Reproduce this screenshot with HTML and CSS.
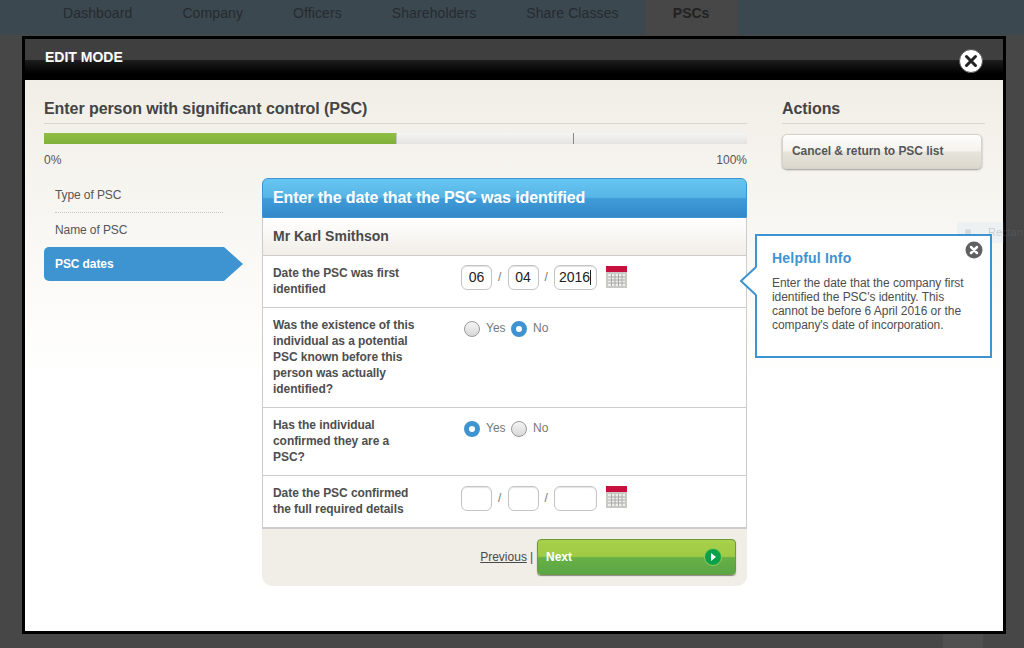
FILE: index.html
```html
<!DOCTYPE html>
<html lang="en">
<head>
    <meta charset="UTF-8">
    <title>Edit PSC</title>
    <link rel="stylesheet" href="styles.css">
</head>
<body>
    <header class="topbar">
        <nav class="topnav">
            <a href="#">Dashboard</a>
            <a href="#">Company</a>
            <a href="#">Officers</a>
            <a href="#">Shareholders</a>
            <a href="#">Share Classes</a>
            <a href="#" class="active">PSCs</a>
        </nav>
    </header>
    <div class="page-tab"></div>

    <!-- Edit modal -->
    <div class="modal">
        <div class="modal-head">
            <span>EDIT MODE</span>
            <a href="#" class="modal-close">
                <svg width="26" height="26" viewBox="0 0 26 26"><circle cx="13" cy="13" r="11.500" fill="#fff" stroke="#555" stroke-width="1"/><path d="M8.500 8.500l9 9M17.500 8.500l-9 9" stroke="#222" stroke-width="3" stroke-linecap="round"/></svg>
            </a>
        </div>
        <div class="modal-body">
            <div class="main-col">
                <h2 class="section-title">Enter person with significant control (PSC)</h2>
                <div class="progress"><div class="progress-fill"></div><div class="progress-tick"></div></div>
                <div class="progress-labels"><span>0%</span><span>100%</span></div>

                <div class="wizard">
                    <ul class="steps">
                        <li>Type of PSC</li>
                        <li>Name of PSC</li>
                        <li class="current">PSC dates</li>
                    </ul>

                    <div class="panel">
                        <h3 class="panel-title">Enter the date that the PSC was identified</h3>
                        <div class="panel-name">Mr Karl Smithson</div>

                        <div class="row row-date">
                            <label>Date the PSC was first identified</label>
                            <div class="field">
                                <span class="box">06</span><i>/</i><span class="box">04</span><i>/</i><span class="box year">2016<b class="caret"></b></span>
                                <svg class="cal" width="21" height="22" viewBox="0 0 21 22"><rect width="21" height="22" fill="#c8c8c4"/><rect width="21" height="6" fill="#c8103f"/><rect x="2" y="8" width="17" height="12" fill="#eeeeea"/><path d="M2 11h17M2 14h17M2 17h17M5.500 8v12M9 8v12M12.500 8v12M16 8v12" stroke="#aaa" stroke-width="1"/></svg>
                            </div>
                        </div>

                        <div class="row row-q1">
                            <label>Was the existence of this individual as a potential PSC known before this person was actually identified?</label>
                            <div class="field radios">
                                <span class="radio"></span><span class="opt">Yes</span>
                                <span class="radio on"></span><span class="opt">No</span>
                            </div>
                        </div>

                        <div class="row row-q2">
                            <label>Has the individual confirmed they are a PSC?</label>
                            <div class="field radios">
                                <span class="radio on"></span><span class="opt">Yes</span>
                                <span class="radio"></span><span class="opt">No</span>
                            </div>
                        </div>

                        <div class="row row-date2">
                            <label>Date the PSC confirmed the full required details</label>
                            <div class="field">
                                <span class="box"></span><i>/</i><span class="box"></span><i>/</i><span class="box year"></span>
                                <svg class="cal" width="21" height="22" viewBox="0 0 21 22"><rect width="21" height="22" fill="#c8c8c4"/><rect width="21" height="6" fill="#c8103f"/><rect x="2" y="8" width="17" height="12" fill="#eeeeea"/><path d="M2 11h17M2 14h17M2 17h17M5.500 8v12M9 8v12M12.500 8v12M16 8v12" stroke="#aaa" stroke-width="1"/></svg>
                            </div>
                        </div>

                        <div class="panel-foot">
                            <a href="#" class="prev">Previous</a><span class="sep">|</span>
                            <a href="#" class="next">
                                <span>Next</span>
                                <svg width="18" height="18" viewBox="0 0 18 18"><circle cx="9" cy="9" r="8.500" fill="#0ba14b" stroke="#8ccf5a" stroke-width="1"/><path d="M7 5l5 4-5 4z" fill="#fff"/></svg>
                            </a>
                        </div>
                    </div>
                </div>
            </div>

            <aside class="side-col">
                <h2 class="section-title">Actions</h2>
                <a href="#" class="cancel-btn">Cancel &amp; return to PSC list</a>
            </aside>

            <!-- Help bubble sits over the body, next to the panel -->
            <div class="ghost"><span></span>Rectan</div>
            <div class="help">
                <svg class="help-arrow" width="18" height="30" viewBox="0 0 18 30"><path d="M18 1L1 15l17 14z" fill="#fff"/><path d="M17 1L2 15l15 14" fill="none" stroke="#3d94d0" stroke-width="2"/></svg>
                <svg class="help-close" width="18" height="18" viewBox="0 0 18 18"><circle cx="9" cy="9" r="8.500" fill="#606060"/><path d="M6 6l6 6M12 6l-6 6" stroke="#fff" stroke-width="2.500" stroke-linecap="round"/></svg>
                <h4>Helpful Info</h4>
                <p>Enter the date that the company first identified the PSC's identity. This cannot be before 6 April 2016 or the company's date of incorporation.</p>
            </div>
        </div>
    </div>
</body>
</html>
```

FILE: styles.css
```css
/* General Styles */
html, body {
    height: 100%;
}

body {
    margin: 0;
    padding: 0;
    background: #474747;
    font-family: "Liberation Sans", Arial, sans-serif;
    color: #4a4a4a;
    overflow: hidden;
    position: relative;
}

a {
    color: inherit;
    text-decoration: none;
}

/* Dimmed top nav */
.topbar {
    height: 35px;
    background: #3c4850;
}

.topnav {
    display: flex;
    gap: 50px;
    padding-left: 63px;
    height: 100%;
}

.topnav a {
    font-size: 14px;
    line-height: 27px;
    letter-spacing: 0.1px;
    color: #252b2f;
}

.topnav a.active {
    margin-left: -24px;
    width: 93px;
    text-align: center;
    font-weight: bold;
    letter-spacing: 0;
    background: #474747;
    color: #222;
}

.page-tab {
    position: absolute;
    left: 943px;
    top: 634px;
    width: 40px;
    height: 14px;
    background: #505050;
}

/* Modal */
.modal {
    position: absolute;
    left: 22px;
    top: 36px;
    width: 978px;
    height: 592px;
    border: 3px solid #000;
    background: #fff;
    display: flex;
    flex-direction: column;
}

.modal-head {
    height: 41px;
    flex: none;
    background: linear-gradient(#3f3f3f 0, #3f3f3f 51%, #1c1c1c 52%, #000 85%);
    color: #fff;
    font-size: 14px;
    font-weight: bold;
    padding: 10px 20px 0;
    box-sizing: border-box;
    position: relative;
}

.modal-close {
    position: absolute;
    right: 20px;
    top: 9px;
    height: 26px;
    margin-right: -1px;
}

.modal-body {
    flex: 1;
    position: relative;
    display: flex;
    gap: 35px;
    padding: 0 19px;
    background: linear-gradient(#f1eee7 0, #fbfaf7 200px, #fff 300px);
}

.main-col {
    width: 703px;
    flex: none;
}

.side-col {
    width: 203px;
    flex: none;
}

.section-title {
    margin: 19px 0 0;
    padding-bottom: 5px;
    height: 19px;
    font-size: 16px;
    line-height: 19px;
    font-weight: bold;
    letter-spacing: -0.07px;
    color: #444;
    border-bottom: 1px solid #d8d5ce;
}

/* Progress */
.progress {
    height: 11px;
    margin-top: 9px;
    background: linear-gradient(#f5f5f3, #e4e3e0);
    position: relative;
}

.progress-fill {
    width: 352px;
    height: 100%;
    background: linear-gradient(#8fbf42, #7fb03a);
    border-right: 1px solid #c4c4c0;
}

.progress-tick {
    position: absolute;
    left: 529px;
    top: 0;
    width: 1px;
    height: 100%;
    background: #888;
}

.progress-labels {
    display: flex;
    justify-content: space-between;
    font-size: 12px;
    line-height: 14px;
    margin-top: 9px;
    color: #555;
}

/* Wizard */
.wizard {
    display: flex;
    margin-top: 11px;
}

.steps {
    list-style: none;
    width: 218px;
    flex: none;
    margin: 0;
    padding: 0;
    font-size: 12px;
    letter-spacing: -0.1px;
}

.steps li {
    width: 168px;
    margin-left: 11px;
    height: 34px;
    line-height: 35px;
    border-bottom: 1px dotted #c8c5bd;
    box-sizing: content-box;
    color: #555;
}

.steps li.current {
    width: 188px;
    margin: -1px 0 0;
    padding-left: 11px;
    height: 34px;
    line-height: 34px;
    border: 0;
    font-weight: bold;
    color: #fff;
    background: #3d94d0;
    border-radius: 5px 0 0 5px;
    clip-path: polygon(0 0, 180px 0, 199px 17px, 180px 34px, 0 34px);
}

.panel {
    width: 485px;
    flex: none;
}

.panel-title {
    margin: 0;
    height: 40px;
    box-sizing: border-box;
    padding-left: 10px;
    font-size: 16px;
    line-height: 37px;
    font-weight: bold;
    letter-spacing: -0.1px;
    color: #fff;
    border: 1px solid #3d94d0;
    border-radius: 6px 6px 0 0;
    background: linear-gradient(#66c6f2 0, #58b5e6 48%, #3f9cd8 52%, #3388c8 100%);
}

.panel-name {
    height: 38px;
    box-sizing: border-box;
    padding-left: 10px;
    font-size: 14px;
    line-height: 37px;
    font-weight: bold;
    color: #4a4a4a;
    border: 1px solid #ccc;
    border-top: 0;
    background: linear-gradient(#fff, #f1eee7);
}

.row {
    display: flex;
    box-sizing: border-box;
    padding: 9px 10px 0;
    background: #fff;
    border: 1px solid #ccc;
    border-top: 0;
}

.row-date { height: 52px; }
.row-q1 { height: 100px; }
.row-q2 { height: 68px; }
.row-date2 { height: 53px; border-bottom-width: 2px; }

.row label {
    width: 144px;
    flex: none;
    font-size: 12px;
    line-height: 16px;
    font-weight: bold;
    letter-spacing: -0.06px;
    color: #4e4e4e;
}

.field {
    margin-left: 44px;
    display: flex;
    align-items: flex-start;
    font-size: 14px;
    color: #222;
}

.row-date2 .field {
    margin-top: 1px;
}

.field i {
    width: 15.5px;
    text-align: center;
    font-style: normal;
    font-size: 12px;
    line-height: 24px;
    color: #777;
}

.box {
    width: 31px;
    height: 25px;
    box-sizing: border-box;
    border: 1px solid #c4c4c4;
    border-radius: 6px;
    text-align: center;
    line-height: 23px;
    font-size: 14px;
    background: #fff;
    box-shadow: inset 0 1px 1px #e4e4e4;
}

.box.year {
    width: 43px;
    position: relative;
    padding-left: 4px;
    text-align: left;
}

.caret {
    display: inline-block;
    width: 1px;
    height: 15px;
    background: #222;
    vertical-align: -3px;
}

.cal {
    margin-left: 9px;
}

.row-date .cal {
    margin-top: 1px;
}

/* Radios */
.radios {
    margin-left: 47px;
    font-size: 12px;
    padding-top: 4px;
}

.radio {
    width: 16px;
    height: 16px;
    box-sizing: border-box;
    border: 1px solid #999;
    border-radius: 50%;
    background: linear-gradient(#f4f4f4, #d8d8d8);
}

.radio.on {
    border: 5px solid #3d94d0;
    background: #fff;
}

.opt {
    width: 25px;
    margin-left: 6px;
    line-height: 15px;
    color: #777;
}

/* Footer */
.panel-foot {
    height: 57px;
    box-sizing: border-box;
    padding: 10px 11px 0 0;
    display: flex;
    justify-content: flex-end;
    align-items: flex-start;
    background: #f1eee7;
    border-radius: 0 0 10px 10px;
    font-size: 12px;
}

.prev {
    text-decoration: underline;
    line-height: 37px;
}

.sep {
    line-height: 37px;
    margin: 0 4px 0 3px;
}

.next {
    width: 199px;
    height: 36px;
    box-sizing: border-box;
    display: flex;
    justify-content: space-between;
    align-items: center;
    padding: 0 13px 0 8px;
    color: #fff;
    font-weight: bold;
    border: 1px solid #6d9a3a;
    border-radius: 4px;
    background: linear-gradient(#a9d04a 0, #9ecb45 48%, #68b046 52%, #5aa645 100%);
    box-shadow: 0 1px 1px #888;
}

/* Actions */
.cancel-btn {
    display: block;
    width: 200px;
    height: 35px;
    margin-top: 10px;
    box-sizing: border-box;
    padding-left: 9px;
    font-size: 12px;
    line-height: 32px;
    font-weight: bold;
    letter-spacing: -0.05px;
    color: #56565a;
    border: 1px solid #d6d3cb;
    border-radius: 5px;
    background: linear-gradient(#fdfdfb 0, #f4f2ec 48%, #e6e3da 52%, #dcd8ce 100%);
    box-shadow: 0 1px 2px #999;
}

/* Help bubble */
.help {
    position: absolute;
    left: 730px;
    top: 154px;
    width: 237px;
    height: 124px;
    box-sizing: border-box;
    padding: 14px 15px 0;
    background: #fff;
    border: 2px solid #3d94d0;
    z-index: 2;
}

.help h4 {
    margin: 0 0 10px;
    font-size: 14px;
    line-height: 16px;
    font-weight: bold;
    letter-spacing: 0.2px;
    color: #3d94d0;
}

.help p {
    margin: 0;
    font-size: 12px;
    line-height: 14px;
    letter-spacing: -0.05px;
    color: #4e4e4e;
}

.help-arrow {
    position: absolute;
    left: -18px;
    top: 30px;
}

.help-close {
    position: absolute;
    right: 7px;
    top: 5px;
}

/* Faint leftover label showing through the overlay */
.ghost {
    position: absolute;
    left: 932px;
    top: 142px;
    width: 47px;
    height: 21px;
    box-sizing: border-box;
    padding-left: 31px;
    font-size: 11px;
    line-height: 21px;
    color: rgba(110, 120, 130, 0.3);
    background: rgba(160, 200, 235, 0.12);
    white-space: nowrap;
}

.ghost span {
    position: absolute;
    left: 8px;
    top: 7px;
    width: 6px;
    height: 6px;
    border-radius: 50%;
    background: rgba(110, 120, 130, 0.2);
}
```
